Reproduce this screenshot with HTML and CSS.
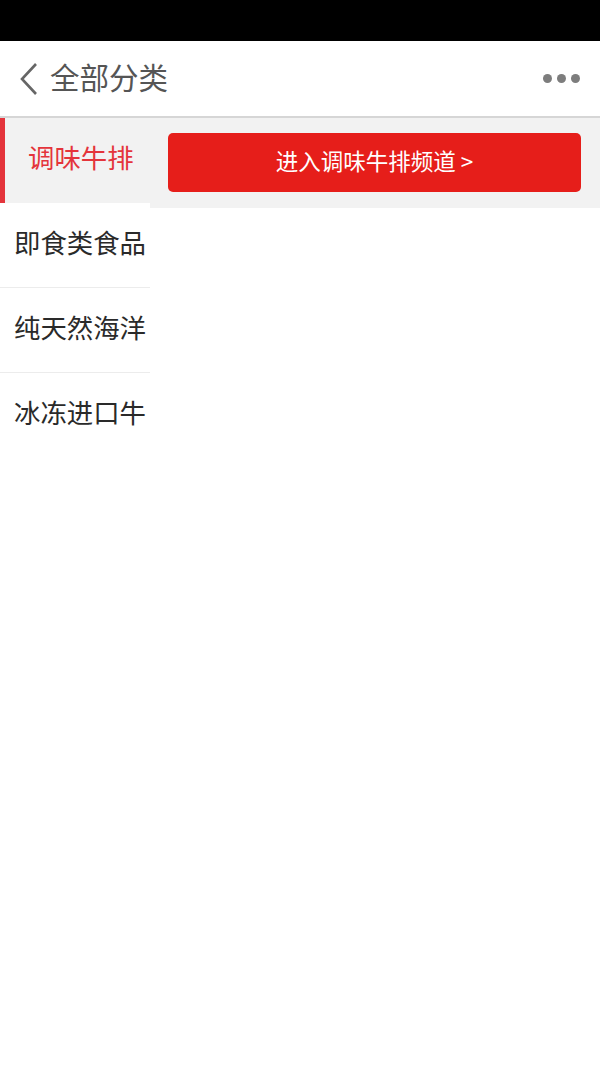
FILE: index.html
```html
<!DOCTYPE html>
<html lang="zh">
<head>
<meta charset="utf-8">
<title>全部分类</title>
<link rel="stylesheet" href="styles.css">
</head>
<body>
<div class="status"></div>
<header class="header">
  <div class="back">
    <svg width="22" height="34" viewBox="0 0 22 34"><path d="M18 2 L4 17 L18 32" fill="none" stroke="#666" stroke-width="2.6"/></svg>
  </div>
  <div class="title">全部分类</div>
  <div class="more"><span></span><span></span><span></span></div>
</header>
<main class="main">
  <nav class="side">
    <div class="item active">调味牛排</div>
    <div class="item">即食类食品</div>
    <div class="item">纯天然海洋</div>
    <div class="item">冰冻进口牛</div>
  </nav>
  <section class="content">
    <div class="panel">
      <div class="btn">进入调味牛排频道 &gt;</div>
    </div>
  </section>
</main>
</body>
</html>
```

FILE: styles.css
```css
html, body {
  margin: 0;
  padding: 0;
  background: #fff;
  font-family: "Noto Sans CJK SC", "Noto Sans", sans-serif;
}
.status {
  height: 41px;
  background: #000;
}
.header {
  height: 75px;
  display: flex;
  align-items: center;
  border-bottom: 2px solid #d6d6d6;
  box-sizing: content-box;
}
.back {
  width: 22px;
  margin-left: 18px;
  display: flex;
  align-items: center;
}
.title {
  margin-left: 10px;
  font-size: 29.5px;
  color: #555;
  flex: 1;
  line-height: 1;
  padding-bottom: 3px;
}
.more {
  display: flex;
  gap: 5px;
  margin-right: 20px;
}
.more span {
  width: 9px;
  height: 9px;
  border-radius: 50%;
  background: #7d7d7d;
}
.main {
  display: flex;
}
.side {
  width: 150px;
  flex: none;
}
.item {
  box-sizing: border-box;
  height: 85px;
  display: flex;
  align-items: center;
  padding-left: 14px;
  padding-bottom: 6px;
  font-size: 26.4px;
  line-height: 1;
  color: #2a2a2a;
  white-space: nowrap;
  overflow: hidden;
  border-bottom: 1px solid #ececec;
}
.item:last-child {
  border-bottom: none;
}
.item.active {
  height: 85px;
  background: #f2f2f2;
  border-left: 5px solid #e4343b;
  padding-left: 23px;
  color: #e4343b;
  border-bottom: none;
}
.content {
  flex: 1;
}
.panel {
  background: #f2f2f2;
  padding: 15px 19px 16px 18px;
}
.btn {
  height: 59px;
  background: #e61e1a;
  border-radius: 5px;
  color: #fff;
  font-size: 22.5px;
  line-height: 1;
  padding-bottom: 5px;
  box-sizing: border-box;
  display: flex;
  align-items: center;
  justify-content: center;
}
```
